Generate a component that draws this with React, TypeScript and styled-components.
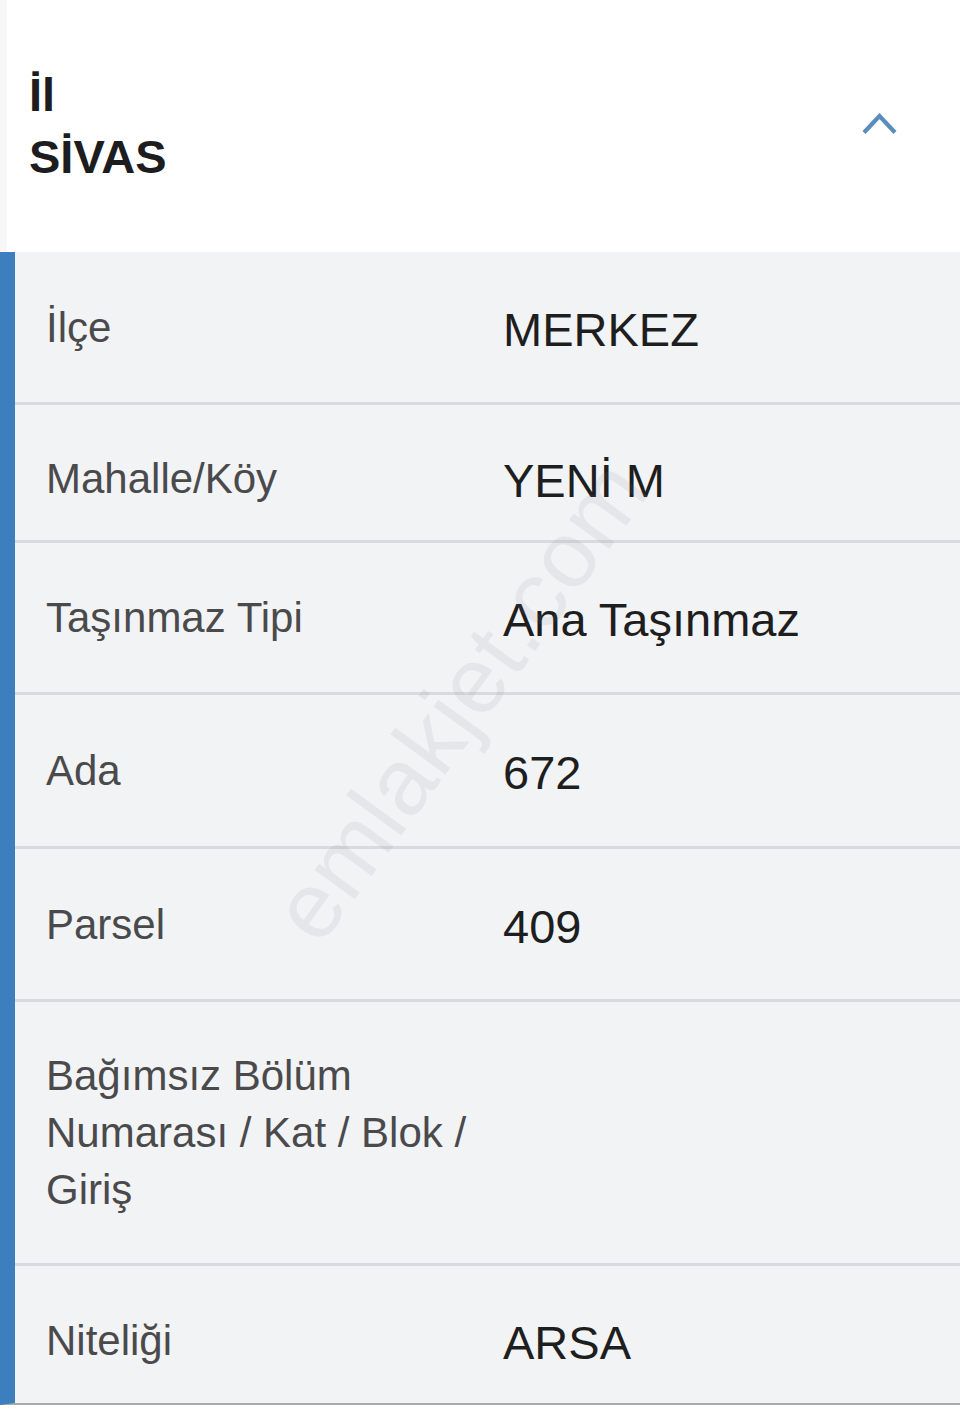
import React from "react";
import styled, { createGlobalStyle } from "styled-components";

const GlobalStyle = createGlobalStyle`
  html, body {
    margin: 0;
    padding: 0;
    background: #ffffff;
  }
  body {
    font-family: "Liberation Sans", Arial, Helvetica, sans-serif;
    -webkit-font-smoothing: antialiased;
  }
`;

const Page = styled.div`
  width: 960px;
  min-height: 1416px;
  background: #ffffff;
  display: flex;
  flex-direction: column;
`;

const Header = styled.header`
  height: 252px;
  box-sizing: border-box;
  display: flex;
  align-items: center;
  justify-content: space-between;
  padding: 0 63px 0 22px;
  background: #ffffff;
  border-left: 7px solid #f7f7f7;
`;

const HeaderTitle = styled.div`
  font-family: "Liberation Sans", Arial, sans-serif;
  font-weight: 700;
  font-size: 47px;
  line-height: 62px;
  color: #1d1d1f;
  display: flex;
  flex-direction: column;
`;

const ChevronButton = styled.button`
  border: none;
  background: transparent;
  padding: 0;
  width: 35px;
  height: 24px;
  display: flex;
  align-items: center;
  justify-content: center;
  margin-top: -4px;
`;

const Section = styled.section`
  position: relative;
  overflow: hidden;
  background: #f2f3f5;
  border-left: 15px solid #3d7ebf;
  border-bottom: 2px solid #a9aaac;
`;

const Row = styled.div<{ $h: number; $shift: number }>`
  position: relative;
  z-index: 1;
  display: grid;
  grid-template-columns: 457px 1fr;
  align-items: center;
  min-height: ${(p) => p.$h - p.$shift}px;
  padding-left: 31px;
  padding-top: ${(p) => p.$shift}px;
  box-sizing: content-box;
  & + & {
    border-top: 3px solid #d9dadd;
  }
`;

const Label = styled.div`
  font-size: 42px;
  line-height: 57px;
  color: #4a4a4c;
  padding-right: 16px;
`;

const Value = styled.div`
  font-size: 47px;
  line-height: 57px;
  color: #1e1e20;
  padding-top: 4px;
`;

const Watermark = styled.div`
  position: absolute;
  left: 445px;
  top: 448px;
  transform: translate(-50%, -50%) rotate(-54deg);
  font-family: "Liberation Sans", Arial, sans-serif;
  font-size: 94px;
  font-weight: 400;
  letter-spacing: 1px;
  color: rgba(120, 125, 135, 0.11);
  white-space: nowrap;
  pointer-events: none;
  z-index: 2;
`;

const rows: { label: string; value: string; h: number; shift: number }[] = [
  { label: "İlçe", value: "MERKEZ", h: 150, shift: 0 },
  { label: "Mahalle/Köy", value: "YENİ M", h: 135, shift: 12 },
  { label: "Taşınmaz Tipi", value: "Ana Taşınmaz", h: 149, shift: 0 },
  { label: "Ada", value: "672", h: 151, shift: 0 },
  { label: "Parsel", value: "409", h: 150, shift: 0 },
  { label: "Bağımsız Bölüm Numarası / Kat / Blok / Giriş", value: "", h: 261, shift: 0 },
  { label: "Niteliği", value: "ARSA", h: 137, shift: 12 },
];

export default function App() {
  return (
    <>
      <GlobalStyle />
      <Page>
        <Header>
          <HeaderTitle>
            <span>İl</span>
            <span>SİVAS</span>
          </HeaderTitle>
          <ChevronButton aria-label="Daralt">
            <svg width="35" height="22" viewBox="0 0 35 22" fill="none">
              <path
                d="M2 19.5 L17.5 3 L33 19.5"
                stroke="#5a8dbb"
                strokeWidth="4.2"
                strokeLinecap="butt"
                strokeLinejoin="miter"
              />
            </svg>
          </ChevronButton>
        </Header>
        <Section>
          {rows.map((r) => (
            <Row key={r.label} $h={r.h} $shift={r.shift}>
              <Label>{r.label}</Label>
              <Value>{r.value}</Value>
            </Row>
          ))}
          <Watermark>emlakjet.com</Watermark>
        </Section>
      </Page>
    </>
  );
}
